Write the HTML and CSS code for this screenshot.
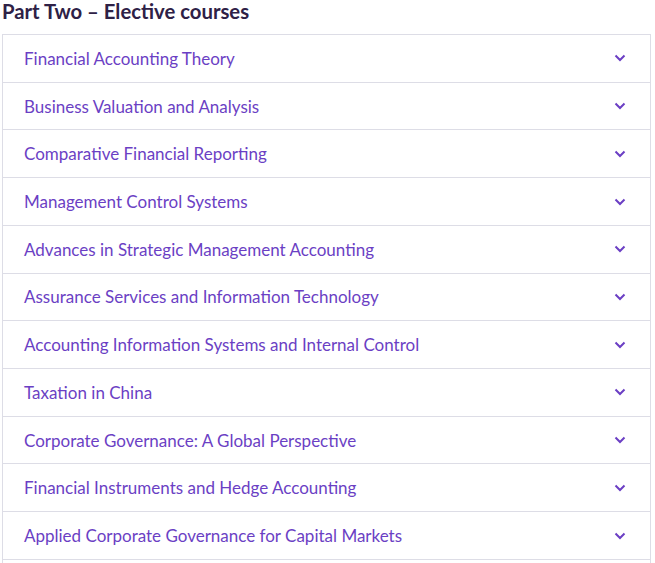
FILE: index.html
```html
<!DOCTYPE html>
<html lang="en">
<head>
    <meta charset="UTF-8">
    <meta name="viewport" content="width=device-width, initial-scale=1.0">
    <title>Elective courses</title>
    <link rel="stylesheet" href="styles.css">
</head>
<body>
    <h2 class="section-title">Part Two – Elective courses</h2>

    <div class="accordion">
        <div class="item"><span class="item-title">Financial Accounting Theory</span><svg class="chevron" viewBox="0 0 12 8"><path d="M1.5 1.5 L6 6 L10.5 1.5"/></svg></div>
        <div class="item"><span class="item-title">Business Valuation and Analysis</span><svg class="chevron" viewBox="0 0 12 8"><path d="M1.5 1.5 L6 6 L10.5 1.5"/></svg></div>
        <div class="item"><span class="item-title">Comparative Financial Reporting</span><svg class="chevron" viewBox="0 0 12 8"><path d="M1.5 1.5 L6 6 L10.5 1.5"/></svg></div>
        <div class="item"><span class="item-title">Management Control Systems</span><svg class="chevron" viewBox="0 0 12 8"><path d="M1.5 1.5 L6 6 L10.5 1.5"/></svg></div>
        <div class="item"><span class="item-title">Advances in Strategic Management Accounting</span><svg class="chevron" viewBox="0 0 12 8"><path d="M1.5 1.5 L6 6 L10.5 1.5"/></svg></div>
        <div class="item"><span class="item-title">Assurance Services and Information Technology</span><svg class="chevron" viewBox="0 0 12 8"><path d="M1.5 1.5 L6 6 L10.5 1.5"/></svg></div>
        <div class="item"><span class="item-title">Accounting Information Systems and Internal Control</span><svg class="chevron" viewBox="0 0 12 8"><path d="M1.5 1.5 L6 6 L10.5 1.5"/></svg></div>
        <div class="item"><span class="item-title">Taxation in China</span><svg class="chevron" viewBox="0 0 12 8"><path d="M1.5 1.5 L6 6 L10.5 1.5"/></svg></div>
        <div class="item"><span class="item-title">Corporate Governance: A Global Perspective</span><svg class="chevron" viewBox="0 0 12 8"><path d="M1.5 1.5 L6 6 L10.5 1.5"/></svg></div>
        <div class="item"><span class="item-title">Financial Instruments and Hedge Accounting</span><svg class="chevron" viewBox="0 0 12 8"><path d="M1.5 1.5 L6 6 L10.5 1.5"/></svg></div>
        <div class="item"><span class="item-title">Applied Corporate Governance for Capital Markets</span><svg class="chevron" viewBox="0 0 12 8"><path d="M1.5 1.5 L6 6 L10.5 1.5"/></svg></div>
        <div class="item"><span class="item-title"></span><svg class="chevron" viewBox="0 0 12 8"><path d="M1.5 1.5 L6 6 L10.5 1.5"/></svg></div>
    </div>
</body>
</html>
```
FILE: styles.css
```css
body {
    font-family: 'Lato', sans-serif;
    margin: 0;
    padding: 0 4px 0 2px;
    background-color: #fff;
}

.section-title {
    font-size: 20.3px;
    font-weight: bold;
    color: #2e2146;
    margin: 0;
    line-height: 22px;
    height: 34px;
}

.accordion {
    border: 1px solid #dddde6;
    border-bottom: none;
}

.item {
    display: flex;
    align-items: center;
    justify-content: space-between;
    height: 46.73px;
    padding: 0 24px 0 21px;
    border-bottom: 1px solid #dddde6;
}

.item-title {
    font-size: 17px;
    color: #6b3fc4;
}

.chevron {
    width: 12px;
    height: 8px;
    fill: none;
    stroke: #6b3fc4;
    stroke-width: 2;
}
```
